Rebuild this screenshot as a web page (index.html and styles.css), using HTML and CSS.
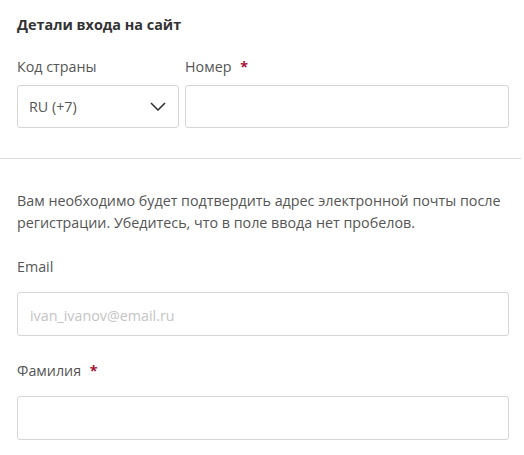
FILE: index.html
```html
<!DOCTYPE html>
<html lang="ru">
<head>
<meta charset="utf-8">
<link rel="stylesheet" href="styles.css">
</head>
<body>
<div class="page">
  <section class="section">
    <h2 class="title">Детали входа на сайт</h2>
    <div class="phone-row">
      <div class="field">
        <label class="label">Код страны</label>
        <div class="box select">
          <span class="value">RU (+7)</span>
          <svg class="chevron" width="16" height="9" viewBox="0 0 16 9"><path d="M1 1 L8 8 L15 1" fill="none" stroke="#333" stroke-width="1.6"/></svg>
        </div>
      </div>
      <div class="field">
        <label class="label">Номер <span class="req">*</span></label>
        <div class="box"></div>
      </div>
    </div>
  </section>
  <hr class="divider">
  <section class="section lower">
    <p class="note">Вам необходимо будет подтвердить адрес электронной почты после регистрации. Убедитесь, что в поле ввода нет пробелов.</p>
    <div class="field email">
      <label class="label">Email</label>
      <div class="box input"><span class="placeholder">ivan_ivanov@email.ru</span></div>
    </div>
    <div class="field surname">
      <label class="label">Фамилия <span class="req">*</span></label>
      <div class="box input"></div>
    </div>
  </section>
</div>
</body>
</html>
```

FILE: styles.css
```css
* { box-sizing: border-box; }
html, body { margin: 0; padding: 0; background: #fff; }
body {
  font-family: "Open Sans", "Liberation Sans", sans-serif;
  font-size: 14.3px;
  color: #555;
  width: 524px;
  height: 455px;
  overflow: hidden;
}
.page { width: 521px; }
.section { padding: 0 12px 0 17px; }
.title {
  margin: 15px 0 0;
  font-size: 14.4px;
  line-height: 20px;
  font-weight: 700;
  color: #333;
}
.phone-row {
  display: grid;
  grid-template-columns: 162px 324px;
  column-gap: 6px;
  margin-top: 22px;
}
.field { display: flex; flex-direction: column; }
.label {
  display: block;
  line-height: 20px;
  font-size: 14.3px;
  color: #555;
}
.req { color: #a3123a; margin-left: 5px; font-weight: 700; }
.phone-row .label { margin-bottom: 8px; }
.box {
  height: 43px;
  border: 1px solid #d6d6d6;
  border-radius: 3px;
  background: #fff;
  display: flex;
  align-items: center;
  padding: 0 12px 0 11px;
}
.select { justify-content: space-between; }
.value { color: #555; }
.divider {
  margin: 30px 0 0;
  border: 0;
  border-top: 1px solid #dcdcdc;
  height: 0;
  width: 521px;
}
.note {
  margin: 31px 0 0;
  line-height: 22px;
  color: #555;
}
.email { margin-top: 23px; }
.field .label + .input { margin-top: 15px; }
.input { height: 44px; padding-left: 12px; padding-top: 2px; }
.placeholder { color: #c4c4c4; }
.surname { margin-top: 25px; }
```
